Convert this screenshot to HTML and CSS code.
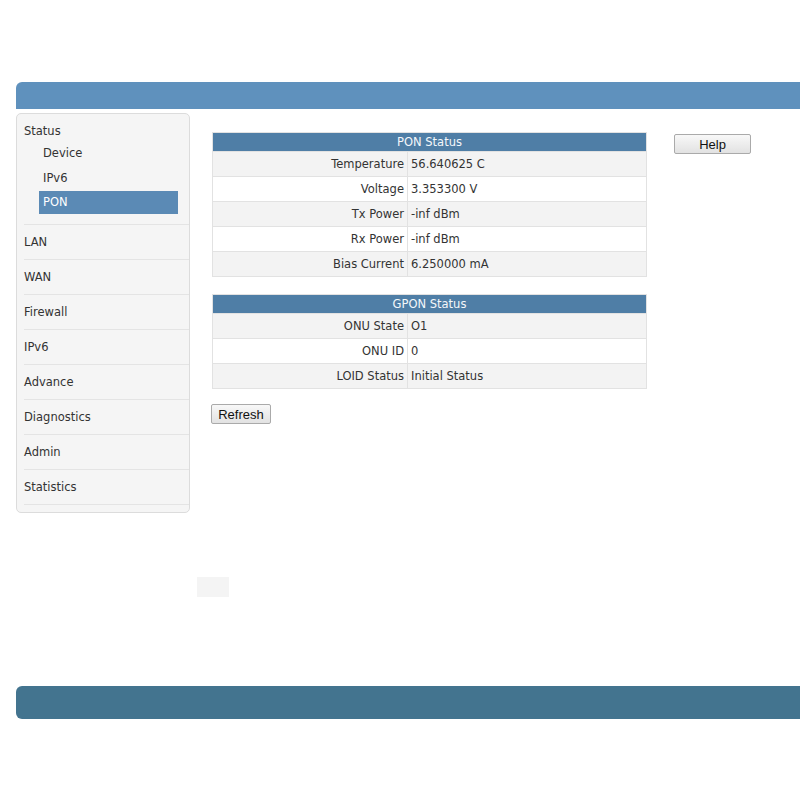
FILE: index.html
```html
<!DOCTYPE html>
<html lang="en">
<head>
    <meta charset="UTF-8">
    <meta name="viewport" content="width=device-width, initial-scale=1.0">
    <title>PON Status</title>
    <link rel="stylesheet" href="styles.css">
</head>
<body>
    <div class="page">
        <div class="topbar"></div>

        <div class="main">
            <!-- Left menu -->
            <div class="sidebar">
                <div class="group">
                    <div class="group-title">Status</div>
                    <div class="sub">Device</div>
                    <div class="sub">IPv6</div>
                    <div class="sub active">PON</div>
                </div>
                <div class="item">LAN</div>
                <div class="item">WAN</div>
                <div class="item">Firewall</div>
                <div class="item">IPv6</div>
                <div class="item">Advance</div>
                <div class="item">Diagnostics</div>
                <div class="item">Admin</div>
                <div class="item">Statistics</div>
            </div>

            <!-- Status tables -->
            <div class="content">
                <table class="info">
                    <tr><th colspan="2">PON Status</th></tr>
                    <tr><td class="label">Temperature</td><td>56.640625 C</td></tr>
                    <tr><td class="label">Voltage</td><td>3.353300 V</td></tr>
                    <tr><td class="label">Tx Power</td><td>-inf dBm</td></tr>
                    <tr><td class="label">Rx Power</td><td>-inf dBm</td></tr>
                    <tr><td class="label">Bias Current</td><td>6.250000 mA</td></tr>
                </table>

                <table class="info last">
                    <tr><th colspan="2">GPON Status</th></tr>
                    <tr><td class="label">ONU State</td><td>O1</td></tr>
                    <tr><td class="label">ONU ID</td><td>0</td></tr>
                    <tr><td class="label">LOID Status</td><td>Initial Status</td></tr>
                </table>

                <button class="btn refresh">Refresh</button>
            </div>

            <div class="help">
                <button class="btn help-btn">Help</button>
            </div>
        </div>

        <div class="spacer"><div class="blank"></div></div>

        <div class="footer"></div>
    </div>
</body>
</html>
```

FILE: styles.css
```css
body {
    margin: 0;
    padding: 0;
    background-color: #ffffff;
    font-family: "DejaVu Sans", Verdana, sans-serif;
    font-size: 11.5px;
    color: #333;
    overflow: hidden;
}
.page {
    padding: 82px 0 0 16px;
}
.topbar {
    height: 27px;
    background-color: #5f91bd;
    border-radius: 6px 0 0 0;
}
.main {
    display: flex;
    align-items: flex-start;
    margin-top: 4px;
}
.sidebar {
    box-sizing: border-box;
    width: 174px;
    height: 400px;
    background-color: #f5f5f5;
    border: 1px solid #dcdcdc;
    border-radius: 5px;
    padding-top: 8px;
}
.group {
    margin-left: 7px;
    padding-bottom: 10px;
    border-bottom: 1px solid #e4e4e4;
}
.group-title {
    height: 19px;
    line-height: 19px;
}
.sub {
    height: 25px;
    line-height: 25px;
    margin-left: 19px;
}
.sub.active {
    height: 23px;
    line-height: 23px;
    margin: 0 11px 0 15px;
    padding-left: 4px;
    background-color: #5b8ab5;
    color: #fff;
}
.item {
    margin-left: 7px;
    height: 34px;
    line-height: 34px;
    border-bottom: 1px solid #e4e4e4;
}
.content {
    margin-left: 22px;
    margin-top: 19px;
    width: 435px;
}
table.info {
    width: 435px;
    border-collapse: collapse;
    border: 1px solid #e2e2e2;
    margin-bottom: 17px;
}
table.info.last {
    margin-bottom: 15px;
}
table.info th {
    height: 18px;
    padding: 0;
    background-color: #4f7ea6;
    color: #f4f7fa;
    font-weight: normal;
    text-align: center;
    border: 1px solid #e2e2e2;
}
table.info td {
    height: 24px;
    padding: 0 3px;
    border: 1px solid #e2e2e2;
    background-color: #fff;
}
table.info tr:nth-child(even) td {
    background-color: #f3f3f3;
}
table.info td.label {
    width: 188px;
    text-align: right;
}
.btn {
    font-family: "Liberation Sans", Arial, sans-serif;
    font-size: 13px;
    color: #111;
    background: linear-gradient(#f8f8f8, #e2e2e2);
    border: 1px solid #aaa;
    border-radius: 2px;
    padding: 0;
    height: 20px;
}
.refresh {
    width: 60px;
    margin-left: -1px;
}
.help {
    margin-left: 27px;
    margin-top: 21px;
}
.help-btn {
    width: 77px;
}
/* empty strip between the menu and the footer */
.spacer {
    box-sizing: border-box;
    height: 173px;
    padding: 64px 0 0 181px;
}
.blank {
    width: 32px;
    height: 20px;
    background-color: #f4f4f4;
}
.footer {
    height: 33px;
    background-color: #43748f;
    border-radius: 6px 0 0 6px;
}
```
